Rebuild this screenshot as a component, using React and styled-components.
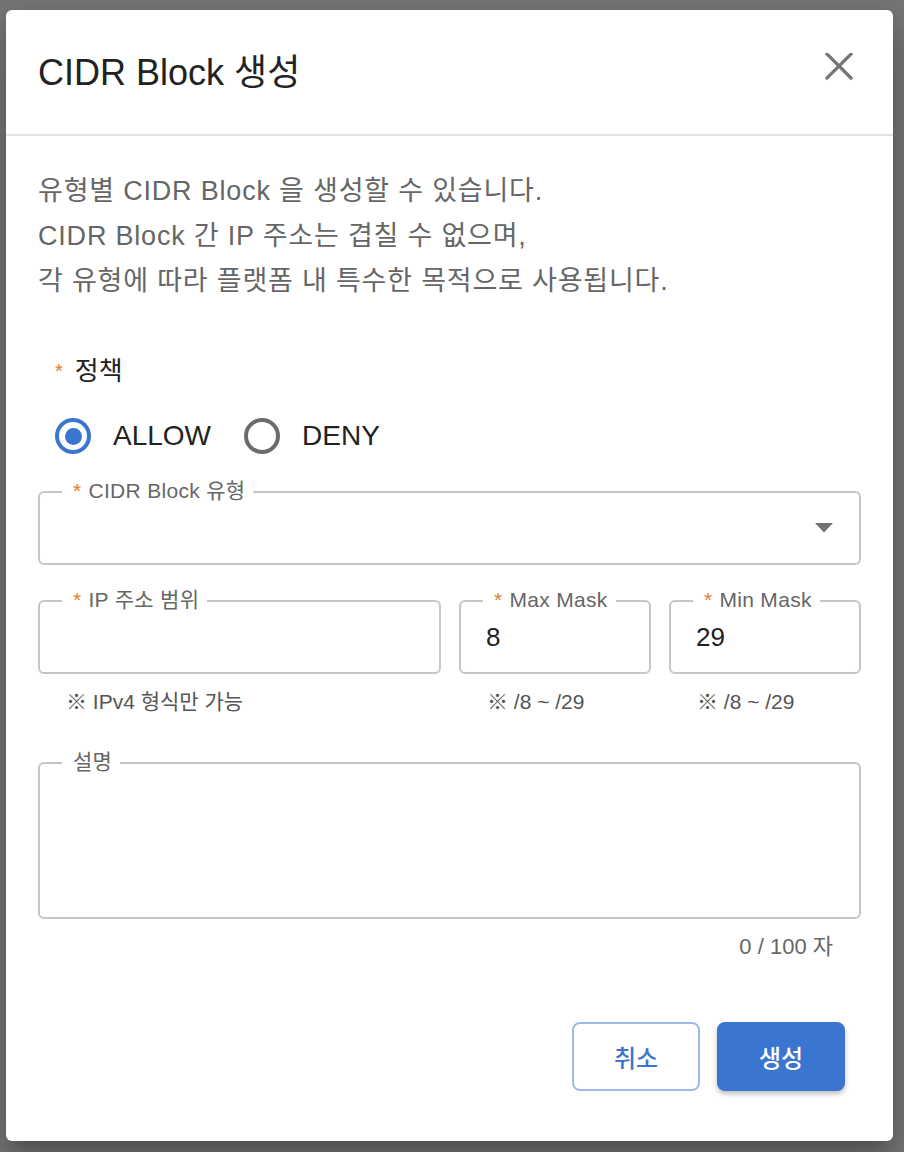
import React from "react";
import styled, { createGlobalStyle } from "styled-components";

const GlobalStyle = createGlobalStyle`
  body {
    margin: 0;
    background-color: #777777;
    font-family: "Liberation Sans", "Noto Sans CJK KR", sans-serif;
  }
`;

const Backdrop = styled.div`
  min-height: 1152px;
  padding: 10px 11px 11px 6px;
  box-sizing: border-box;
`;

const Dialog = styled.div`
  width: 887px;
  background-color: #fff;
  border-radius: 6px;
  box-shadow: 0 11px 15px -7px rgba(0, 0, 0, 0.2),
    0 24px 38px 3px rgba(0, 0, 0, 0.14), 0 9px 46px 8px rgba(0, 0, 0, 0.12);
`;

const Header = styled.div`
  height: 126px;
  box-sizing: border-box;
  display: flex;
  align-items: center;
  justify-content: space-between;
  padding: 0 40px 6px 32px;
  border-bottom: 2px solid #e3e3e3;
`;

const Title = styled.h2`
  margin: 0;
  font-size: 36px;
  font-weight: normal;
  color: #222;
`;

const CloseButton = styled.button`
  align-self: flex-start;
  margin-top: 43px;
  width: 28px;
  height: 28px;
  padding: 0;
  border: none;
  background: none;
  cursor: pointer;
`;

const Body = styled.div`
  padding: 33px 32px 50px;
`;

const Description = styled.p`
  margin: 0;
  font-size: 27px;
  letter-spacing: 0.8px;
  line-height: 45px;
  color: #666;
`;

const PolicyGroup = styled.div`
  margin-top: 52px;
  padding-left: 17px;
`;

const Asterisk = styled.span`
  color: #e57c2c;
  font-size: ${(p) => p.$size || 21}px;
  margin-right: ${(p) => p.$gap || 7}px;
`;

const GroupLabel = styled.div`
  display: flex;
  align-items: center;
  font-size: 26px;
  line-height: 30px;
  color: #222;
`;

const RadioRow = styled.div`
  margin-top: 28px;
  height: 44px;
  display: flex;
  align-items: center;
  gap: 33px;
`;

const RadioOption = styled.label`
  display: flex;
  align-items: center;
  gap: 22px;
  font-size: 28px;
  color: #222;
  cursor: pointer;
`;

const RadioCircle = styled.span`
  width: 36px;
  height: 36px;
  box-sizing: border-box;
  border-radius: 50%;
  border: 4px solid ${(p) => (p.$checked ? "#3a76cf" : "#6b6b6b")};
  display: flex;
  align-items: center;
  justify-content: center;

  &::after {
    content: "";
    display: ${(p) => (p.$checked ? "block" : "none")};
    width: 17px;
    height: 17px;
    border-radius: 50%;
    background-color: #3a76cf;
  }
`;

const Field = styled.div`
  position: relative;
  height: ${(p) => p.$height || 74}px;
  margin-top: ${(p) => p.$top || 0}px;
  border: 2px solid #c6c6c6;
  border-radius: 6px;
  box-sizing: border-box;
  display: flex;
  align-items: center;
  justify-content: ${(p) => (p.$select ? "flex-end" : "flex-start")};
  padding: 0 26px 0 25px;
`;

const Legend = styled.span`
  position: absolute;
  top: -14px;
  left: 22px;
  padding: 0 8px 0 11px;
  background-color: #fff;
  font-size: 21px;
  letter-spacing: 0.3px;
  line-height: 24px;
  color: #666;
  white-space: nowrap;
`;

const Value = styled.span`
  font-size: 26px;
  color: #222;
`;

const FieldRow = styled.div`
  margin-top: 35px;
  display: grid;
  grid-template-columns: 403px 192px 192px;
  gap: 18px;
`;

const Helper = styled.div`
  margin-top: 16px;
  padding-left: 28px;
  font-size: 21px;
  line-height: 24px;
  color: #555;
`;

const Counter = styled.div`
  margin-top: 16px;
  padding-right: 28px;
  text-align: right;
  font-size: 22px;
  line-height: 24px;
  color: #666;
`;

const Footer = styled.div`
  margin-top: 63px;
  padding-right: 16px;
  display: flex;
  justify-content: flex-end;
  gap: 17px;
`;

const Button = styled.button`
  width: 128px;
  height: 69px;
  border-radius: 8px;
  box-sizing: border-box;
  font-family: inherit;
  font-size: 24px;
  font-weight: 500;
  cursor: pointer;
  border: 2px solid ${(p) => (p.$primary ? "#3a76cf" : "#9dbbea")};
  background-color: ${(p) => (p.$primary ? "#3a76cf" : "#fff")};
  color: ${(p) => (p.$primary ? "#fff" : "#3a76cf")};
  box-shadow: ${(p) =>
    p.$primary ? "0 3px 5px rgba(0, 0, 0, 0.25)" : "none"};
`;

const CloseIcon = () => (
  <svg width="28" height="28" viewBox="0 0 28 28">
    <path
      d="M2 1 L26 25 M26 1 L2 25"
      stroke="#757575"
      strokeWidth="3.2"
      strokeLinecap="square"
    />
  </svg>
);

const ArrowIcon = () => (
  <svg width="18" height="10" viewBox="0 0 18 10">
    <path d="M0 0 L18 0 L9 9.5 Z" fill="#707070" />
  </svg>
);

const Required = () => <Asterisk>*</Asterisk>;

export default function App() {
  return (
    <Backdrop>
      <GlobalStyle />
      <Dialog>
        <Header>
          <Title>CIDR Block 생성</Title>
          <CloseButton aria-label="닫기">
            <CloseIcon />
          </CloseButton>
        </Header>
        <Body>
          <Description>
            유형별 CIDR Block 을 생성할 수 있습니다.
            <br />
            CIDR Block 간 IP 주소는 겹칠 수 없으며,
            <br />
            각 유형에 따라 플랫폼 내 특수한 목적으로 사용됩니다.
          </Description>

          <PolicyGroup>
            <GroupLabel>
              <Asterisk $size={20} $gap={12}>
                *
              </Asterisk>
              정책
            </GroupLabel>
            <RadioRow>
              <RadioOption>
                <RadioCircle $checked />
                ALLOW
              </RadioOption>
              <RadioOption>
                <RadioCircle />
                DENY
              </RadioOption>
            </RadioRow>
          </PolicyGroup>

          <Field $top={33} $select>
            <Legend>
              <Required />
              CIDR Block 유형
            </Legend>
            <ArrowIcon />
          </Field>

          <FieldRow>
            <div>
              <Field>
                <Legend>
                  <Required />
                  IP 주소 범위
                </Legend>
              </Field>
              <Helper>※ IPv4 형식만 가능</Helper>
            </div>
            <div>
              <Field>
                <Legend>
                  <Required />
                  Max Mask
                </Legend>
                <Value>8</Value>
              </Field>
              <Helper>※ /8 ~ /29</Helper>
            </div>
            <div>
              <Field>
                <Legend>
                  <Required />
                  Min Mask
                </Legend>
                <Value>29</Value>
              </Field>
              <Helper>※ /8 ~ /29</Helper>
            </div>
          </FieldRow>

          <Field $top={48} $height={157}>
            <Legend>설명</Legend>
          </Field>
          <Counter>0 / 100 자</Counter>

          <Footer>
            <Button>취소</Button>
            <Button $primary>생성</Button>
          </Footer>
        </Body>
      </Dialog>
    </Backdrop>
  );
}
